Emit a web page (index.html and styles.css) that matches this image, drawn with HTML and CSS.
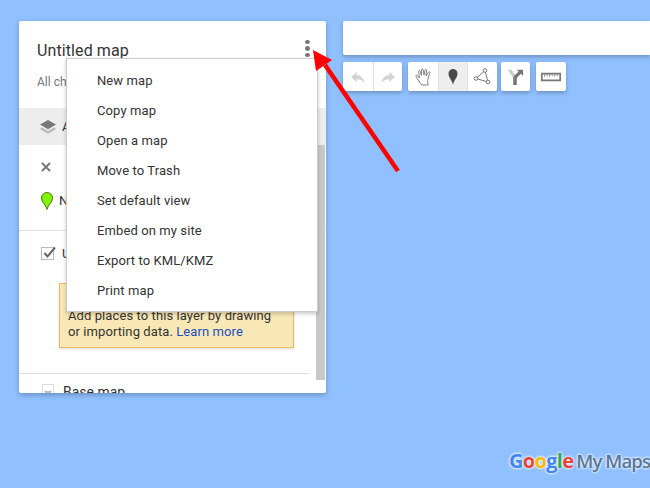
FILE: index.html
```html
<!DOCTYPE html>
<html lang="en">
<head>
<meta charset="utf-8">
<title>Untitled map - Google My Maps</title>
<link rel="stylesheet" href="styles.css">
</head>
<body>
<div class="map">
  <div class="top">
    <aside class="panel">
      <header class="head">
        <h1 class="title">Untitled map</h1>
        <span class="dots"><i></i><i></i><i></i></span>
      </header>
      <p class="saved">All changes saved in Drive</p>
      <div class="allitems">
        <svg class="layers" viewBox="0 0 16 14"><path d="M8 0l8 4.600-8 4.600L0 4.600z" fill="#777"/><path d="M2 7.600l6 3.400 6-3.400 2 1.400-8 5-8-5z" fill="#bbb"/></svg>
        <span>All items</span>
      </div>
      <div class="close">
        <svg class="x" viewBox="0 0 10 10"><path d="M1 1l8 8M9 1l-8 8" stroke="#777" stroke-width="2"/></svg>
      </div>
      <div class="pinrow">
        <svg class="pin" viewBox="0 0 12 18"><path d="M6 17.500C5 12.500.5 10.500.5 6a5.500 5.500 0 0 1 11 0C11.500 10.500 7 12.500 6 17.500z" fill="#80f400" stroke="#3f6b10" stroke-width=".9"/></svg>
        <span>New point</span>
      </div>
      <div class="layer">
        <div class="layerhead">
          <span class="check"><svg viewBox="0 0 14 14"><path d="M2.500 7l3 3.500L13 1.500" fill="none" stroke="#666" stroke-width="2"/></svg></span>
          <span>Untitled layer</span>
        </div>
        <div class="notice">Add places to this layer by drawing<br>or importing data. <a href="#">Learn more</a></div>
      </div>
      <div class="base">
        <span class="drop"></span>
        <span>Base map</span>
      </div>
      <div class="thumb"></div>
    </aside>
    <div class="side">
      <div class="search"></div>
      <div class="tools">
        <div class="group">
          <span class="tool"><svg viewBox="0 0 24 24"><path fill="#d4d4d4" d="M10 9V5l-7 7 7 7v-4.100c5 0 8.500 1.600 11 5.100-1-5-4-10-11-11z"/></svg></span>
          <span class="tool"><svg viewBox="0 0 24 24"><path fill="#d4d4d4" d="M14 9V5l7 7-7 7v-4.100c-5 0-8.500 1.600-11 5.100 1-5 4-10 11-11z"/></svg></span>
        </div>
        <div class="group">
          <span class="tool"><svg viewBox="2 3 17 18"><path fill="none" stroke="#777" stroke-width=".9" stroke-linejoin="round" stroke-linecap="round" d="M7 17L3.500 11.500c-.6-1 .7-1.800 1.400-.9L7 13 6 6.500c-.2-1.100 1.300-1.500 1.600-.4L9 10.500 9 4.800c0-1.200 1.600-1.200 1.700 0L11.500 10l1-4.800c.3-1.100 1.800-.8 1.600.3L13.500 11l2.300-3.700c.6-1 2-.3 1.500.7L15.500 14c-.4 2-.5 3.500.2 6H9c-.3-1.200-1-2.200-2-3z"/></svg></span>
          <span class="tool active"><svg viewBox="3 3 18 20"><path fill="#4a4a4a" d="M12 22c-1-6-5-8-5-13a5 5 0 0 1 10 0c0 5-4 7-5 13z"/></svg></span>
          <span class="tool"><svg viewBox="3 2 18 18"><g fill="#fff" stroke="#777" stroke-width="1"><path fill="none" d="M15 4.500L6 12.500l12 3.500z"/><circle cx="15" cy="4.500" r="1.800"/><circle cx="6" cy="12.500" r="1.800"/><circle cx="18" cy="16" r="1.800"/></g></svg></span>
        </div>
        <div class="group">
          <span class="tool"><svg viewBox="2 2 20 20"><path fill="#ccc" d="M4 4h4l5 7-2.500 3z"/><path fill="#777" d="M14 4h7v7l-2.500-2.500L15 12c-.7.800-1 1.500-1 2.500V21h-4v-7c0-1.500.6-3 1.700-4l4.300-4z"/></svg></span>
        </div>
        <div class="group">
          <span class="tool"><svg viewBox="0 0 24 12" class="ruler"><path fill="none" stroke="#777" stroke-width="2" d="M1 2h22v8H1z"/><path stroke="#777" d="M4.500 2v4M7.500 2v3M10.500 2v4M13.500 2v3M16.500 2v4M19.500 2v3"/></svg></span>
        </div>
      </div>
    </div>
  </div>
  <div class="logo"><span class="goog"><b class="b">G</b><b class="r">o</b><b class="y">o</b><b class="b">g</b><b class="g">l</b><b class="r">e</b></span><span class="mm">My Maps</span></div>

  <ul class="menu">
    <li>New map</li>
    <li>Copy map</li>
    <li>Open a map</li>
    <li>Move to Trash</li>
    <li>Set default view</li>
    <li>Embed on my site</li>
    <li>Export to KML/KMZ</li>
    <li>Print map</li>
  </ul>
  <svg class="arrow" viewBox="0 0 100 130"><path d="M85 121L12 15" stroke="#f00" stroke-width="4.500" fill="none"/><path d="M0 0l19 10-16 11z" fill="#f00"/></svg>
</div>
</body>
</html>
```
FILE: styles.css
```css
* { box-sizing: border-box; }
html, body { margin: 0; height: 100%; }
body { font-family: Roboto, "Liberation Sans", sans-serif; color: #333; overflow: hidden; }
.map { position: relative; width: 650px; height: 488px; background: #90c0ff; padding: 21px 0 0 19px; overflow: hidden; }
.top { display: flex; align-items: flex-start; gap: 17px; }

.panel { position: relative; width: 307px; height: 372px; background: #fff; border-radius: 2px; box-shadow: 0 2px 5px rgba(0,0,0,.25); overflow: hidden; flex: none; }
.head { display: flex; justify-content: space-between; align-items: flex-start; padding: 20px 16px 0 18px; height: 53px; }
.title { margin: 0; font-size: 16px; font-weight: 400; line-height: 20px; letter-spacing: .1px; color: #333; }
.dots { display: flex; flex-direction: column; gap: 2px; width: 5px; margin-top: -1px; }
.dots i { width: 5px; height: 4.300px; border-radius: 50%; background: #777; }
.saved { margin: 0; padding: 0 18px; font-size: 12px; line-height: 16px; height: 34px; color: #777; }
.allitems { display: flex; align-items: center; height: 37px; padding-left: 21px; gap: 6px; background: #ededed; font-size: 13px; }
.layers { width: 16px; height: 14px; }
.close { height: 29px; padding: 17px 0 0 22px; }
.x { display: block; width: 10px; height: 10px; }
.pinrow { display: flex; align-items: flex-start; gap: 6px; height: 57px; padding: 18px 0 0 22px; border-bottom: 1px solid #e0e0e0; font-size: 13px; line-height: 18px; }
.pin { width: 12px; height: 18px; flex: none; }
.layer { height: 143px; border-bottom: 1px solid #e0e0e0; margin-right: 16px; }
.layerhead { display: flex; align-items: flex-start; gap: 8px; padding: 16px 0 0 22px; font-size: 13px; line-height: 14px; }
.check { display: block; width: 13px; height: 13px; border: 1px solid #bbb; position: relative; }
.check svg { display: block; position: absolute; left: 0; top: -2px; width: 14px; height: 14px; }
.notice { margin: 22px 0 0 40px; width: 235px; height: 65px; padding: 24px 8px 0; background: #f9e8b5; border: 1px solid #f0b95e; font-size: 13px; line-height: 16px; letter-spacing: .09px; color: #333; box-shadow: 0 1px 2px rgba(0,0,0,.15); }
.notice a { color: #1a4fc4; text-decoration: none; }
.base { display: flex; align-items: flex-start; gap: 9px; padding: 10px 0 0 23px; font-size: 14px; line-height: 16px; }
.drop { position: relative; width: 12px; height: 14px; border: 1px solid #ddd; }
.drop::after { content: ""; position: absolute; left: 1px; top: 6px; border: 4px solid transparent; border-top: 5px solid #bbb; }
.thumb { position: absolute; right: 1px; top: 124px; width: 9px; height: 235px; background: #c8c8c8; }

.side { flex: 1; display: flex; flex-direction: column; gap: 7px; }
.search { height: 34px; background: #fff; border-radius: 2px 0 0 2px; box-shadow: 0 2px 4px rgba(0,0,0,.25); }
.tools { display: flex; }
.group { display: flex; height: 29px; background: #fff; border-radius: 2px; box-shadow: 0 2px 4px rgba(0,0,0,.25); margin-right: 6px; }
.group:nth-child(2) { margin-right: 4px; }
.tool { display: flex; align-items: center; justify-content: center; width: 29.500px; height: 29px; border-left: 1px solid #e2e2e2; }
.tool:first-child { border-left: 0; }
.tool svg { width: 18px; height: 18px; }
.tool svg.ruler { width: 20px; height: 10px; }
.tool.active { background: #eee; }

.logo { position: absolute; left: 509px; bottom: 14px; display: flex; align-items: baseline; gap: 3px; line-height: 26px; white-space: nowrap; text-shadow: 0 0 3px #fff, 0 0 3px #fff; }
.goog { font-family: "Open Sans", "Liberation Sans", sans-serif; font-size: 20px; letter-spacing: -.7px; }
.goog b { font-weight: 700; }
.b { color: #4285f4; }
.r { color: #ea4335; }
.y { color: #fbbc05; }
.g { color: #34a853; }
.mm { font-family: "Open Sans", "Liberation Sans", sans-serif; font-size: 18.500px; font-weight: 600; letter-spacing: -.9px; color: #587696; }

.menu { position: absolute; left: 66px; top: 58px; width: 252px; height: 254px; margin: 0; padding: 7px 0; list-style: none; background: #fff; border: 1px solid #ccc; box-shadow: 0 2px 4px rgba(0,0,0,.2); }
.menu li { height: 30px; padding-left: 30px; font-size: 13px; line-height: 30px; color: #333; letter-spacing: .1px; }
.arrow { position: absolute; left: 313px; top: 50px; width: 100px; height: 130px; }
```
